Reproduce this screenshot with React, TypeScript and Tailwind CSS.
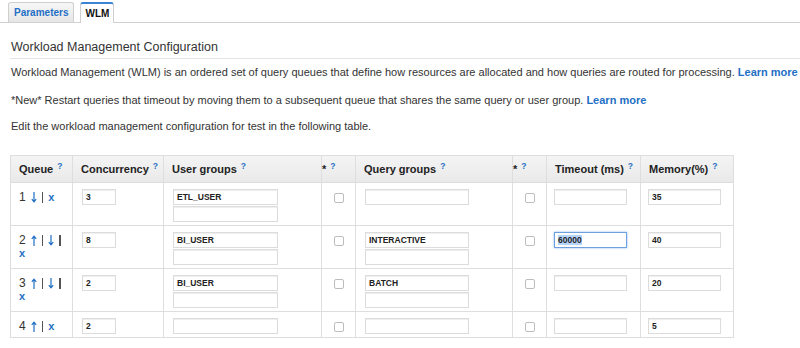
import React from 'react';

type Row = {
  n: number;
  up: boolean;
  down: boolean;
  concurrency: string;
  users: string;
  queries: string;
  timeout: string;
  memory: string;
  focus?: boolean;
};

const ROWS: Row[] = [
  { n: 1, up: false, down: true, concurrency: '3', users: 'ETL_USER', queries: '', timeout: '', memory: '35' },
  { n: 2, up: true, down: true, concurrency: '8', users: 'BI_USER', queries: 'INTERACTIVE', timeout: '60000', memory: '40', focus: true },
  { n: 3, up: true, down: true, concurrency: '2', users: 'BI_USER', queries: 'BATCH', timeout: '', memory: '20' },
  { n: 4, up: true, down: false, concurrency: '2', users: '', queries: '', timeout: '', memory: '5' },
];

const font = "font-['Liberation_Sans',Arial,sans-serif]";

function Help() {
  return <span className="relative -top-[4px] ml-[4px] text-[8.5px] font-bold text-[#1f6fc5]">?</span>;
}

function Field({ value, width, focus }: { value: string; width: string; focus?: boolean }) {
  return (
    <div
      className={`${width} h-[16px] border bg-white px-[3px] text-[8.5px] font-bold leading-[14px] text-[#222] ${
        focus ? 'border-[#6f9fdc] shadow-[0_0_2px_#8fb8ec]' : 'border-[#dcdcdc] shadow-[inset_0_1px_1px_#eee]'
      }`}
    >
      {value && (focus ? <span className="bg-[#b5d4fb]">{value}</span> : value)}
    </div>
  );
}

function Check() {
  return <div className="mx-auto mt-[4px] w-[10px] h-[10px] rounded-[2px] border border-[#bdbdbd] bg-white" />;
}

function Arrow({ up }: { up?: boolean }) {
  return (
    <svg width="6" height="11" viewBox="0 0 6 11" className="text-[#1f6fc5]">
      {up ? (
        <path d="M3 1.5V11M0.8 3.8L3 1.2L5.2 3.8" stroke="currentColor" strokeWidth="1.2" fill="none" />
      ) : (
        <path d="M3 0V9.5M0.8 7.2L3 9.8L5.2 7.2" stroke="currentColor" strokeWidth="1.2" fill="none" />
      )}
    </svg>
  );
}

function Bar() {
  return <span className="w-[1.5px] h-[11px] bg-[#555]" />;
}

function QueueCell({ row }: { row: Row }) {
  return (
    <div className="flex flex-wrap items-center gap-x-[5px] gap-y-0 text-[12px] leading-[13px] text-[#333] pt-[2px]">
      <span>{row.n}</span>
      {row.up && <Arrow up />}
      {row.up && <Bar />}
      {row.down && <Arrow />}
      {row.down && <Bar />}
      <span className="text-[#1f6fc5] font-bold text-[11px]">x</span>
    </div>
  );
}

export default function App() {
  const th = 'border border-[#dedede] text-left font-bold text-[11px] text-[#222] pl-[8px] align-middle';
  const td = 'border border-[#dedede] align-top pt-[6px] pb-[3px] pl-[9px]';

  return (
    <div className={`w-[800px] h-[348px] bg-white overflow-hidden ${font}`}>
      <div className="flex items-end h-[23px] pl-[8px] gap-[6px] border-b border-[#d0d0d0]">
        <div className="h-[20px] px-[5px] flex items-center rounded-t-[3px] border border-b-0 border-[#cfcfcf] bg-gradient-to-b from-[#f7f7f7] to-[#e6e6e6] text-[10px] font-bold text-[#1f6fc5]">
          Parameters
        </div>
        <div className="h-[21px] px-[4px] flex items-center rounded-t-[3px] border border-[#cfcfcf] border-t-2 border-t-[#3b83d4] border-b-0 bg-white text-[10px] font-bold text-[#111] mb-[-1px]">
          WLM
        </div>
      </div>

      <div className="pl-[10px] pt-[15px]">
        <div className="text-[12.5px] leading-[18px] text-[#333] pl-[1px] pb-[2px] border-b border-[#e4e4e4]">
          Workload Management Configuration
        </div>
        <p className="mt-[5px] pl-[1px] text-[11px] leading-[16px] text-[#333] whitespace-nowrap">
          Workload Management (WLM) is an ordered set of query queues that define how resources are allocated and how queries are routed for processing.{' '}
          <a className="text-[#1f6fc5] font-bold">Learn more</a>
        </p>
        <p className="mt-[12px] pl-[1px] text-[11px] leading-[16px] text-[#333] whitespace-nowrap">
          *New* Restart queries that timeout by moving them to a subsequent queue that shares the same query or user group.{' '}
          <a className="text-[#1f6fc5] font-bold">Learn more</a>
        </p>
        <p className="mt-[10px] pl-[1px] text-[11px] leading-[16px] text-[#333]">
          Edit the workload management configuration for test in the following table.
        </p>

        <table className="mt-[21px] border-collapse table-fixed w-[723px] border border-[#dedede]">
          <colgroup>
            <col className="w-[62px]" />
            <col className="w-[91px]" />
            <col className="w-[158px]" />
            <col className="w-[34px]" />
            <col className="w-[157px]" />
            <col className="w-[34px]" />
            <col className="w-[94px]" />
            <col className="w-[93px]" />
          </colgroup>
          <thead>
            <tr className="h-[27px] bg-gradient-to-b from-[#f4f4f4] to-[#e9e9e9]">
              <th className={th}>Queue<Help /></th>
              <th className={th}>Concurrency<Help /></th>
              <th className={th}>User groups<Help /></th>
              <th className={`${th} !pl-0 text-center`}>*<Help /></th>
              <th className={th}>Query groups<Help /></th>
              <th className={`${th} !pl-0 text-center`}>*<Help /></th>
              <th className={th}>Timeout (ms)<Help /></th>
              <th className={th}>Memory(%)<Help /></th>
            </tr>
          </thead>
          <tbody>
            {ROWS.map((row) => (
              <tr key={row.n}>
                <td className={`${td} !pl-[8px] !pr-[4px]`}>
                  <QueueCell row={row} />
                </td>
                <td className={td}>
                  <Field value={row.concurrency} width="w-[34px]" />
                </td>
                <td className={td}>
                  <Field value={row.users} width="w-[105px]" />
                  {row.n !== 4 && (
                    <div className="mt-[1px]">
                      <Field value="" width="w-[105px]" />
                    </div>
                  )}
                </td>
                <td className={`${td} !pl-0`}>
                  <Check />
                </td>
                <td className={td}>
                  <Field value={row.queries} width="w-[104px]" />
                  {row.n === 2 || row.n === 3 ? (
                    <div className="mt-[1px]">
                      <Field value="" width="w-[104px]" />
                    </div>
                  ) : null}
                </td>
                <td className={`${td} !pl-0`}>
                  <Check />
                </td>
                <td className={`${td} !pl-[7px]`}>
                  <Field value={row.timeout} width="w-[73px]" focus={row.focus} />
                </td>
                <td className={`${td} !pl-[7px]`}>
                  <Field value={row.memory} width="w-[73px]" />
                </td>
              </tr>
            ))}
          </tbody>
        </table>
      </div>
    </div>
  );
}
